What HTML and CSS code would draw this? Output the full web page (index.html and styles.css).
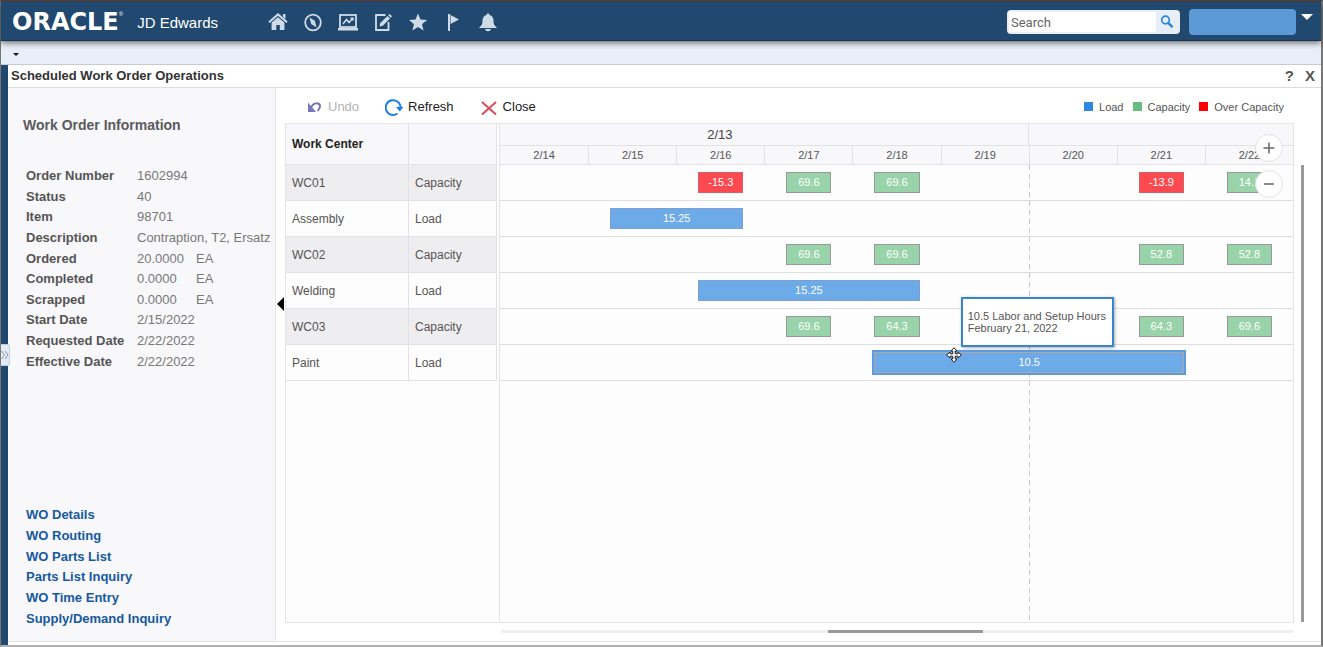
FILE: index.html
```html
<!DOCTYPE html>
<html lang="en">
<head>
<meta charset="utf-8">
<title>Scheduled Work Order Operations</title>
<link rel="stylesheet" href="styles.css">
</head>
<body>
<div class="app">
  <header class="topbar">
    <div class="brand"><span class="brand-logo">ORACLE</span><sup class="brand-mark">®</sup><span class="brand-product">JD Edwards</span></div>
    <nav class="nav">
      <button type="button" class="nav-btn" aria-label="Home"><svg viewBox="0 0 20 20"><path d="M1 10.2 10 2.4l9 7.8" fill="none" stroke="currentColor" stroke-width="2"/><path d="M15 2h2.4v5L15 5zM3.600 10.600 10 5.200l6.400 5.400V18h-4.600v-5H8.300v5H3.600z" fill="currentColor"/></svg></button>
      <button type="button" class="nav-btn" aria-label="Navigator"><svg viewBox="0 0 20 20"><circle cx="10" cy="10.500" r="7.800" fill="none" stroke="currentColor" stroke-width="1.800"/><path d="M6.500 5.500 11.800 8.800 13.500 15.500 8.200 12z" fill="currentColor"/></svg></button>
      <button type="button" class="nav-btn" aria-label="Dashboard"><svg viewBox="0 0 20 20"><rect x="2" y="3" width="16" height="12" fill="none" stroke="currentColor" stroke-width="1.800"/><path d="M5 12 8.500 7.500 11 10.500 15 6M12.500 6.200H15V8.500" fill="none" stroke="currentColor" stroke-width="1.500"/><path d="M0 16h20v2.500H0z" fill="currentColor"/></svg></button>
      <button type="button" class="nav-btn" aria-label="Edit"><svg viewBox="0 0 20 20"><path d="M12.500 3H3v15h12.500V10" fill="none" stroke="currentColor" stroke-width="1.800"/><path d="M6.500 14.500 7.300 11 14.500 4 17 6.500 9.800 13.700zM15.300 3.200 16.700 2l2.300 2.300-1.300 1.400z" fill="currentColor"/></svg></button>
      <button type="button" class="nav-btn" aria-label="Favorites"><svg viewBox="0 0 20 20"><path d="m10 1.500 2.500 6 6.500.5-5 4.200 1.600 6.300L10 15.100 4.400 18.500 6 12.200 1 8l6.500-.5z" fill="currentColor"/></svg></button>
      <button type="button" class="nav-btn" aria-label="Watchlist"><svg viewBox="0 0 20 20"><path d="M5 2h2v17H5zM7.500 3 16 7.500 7.500 12z" fill="currentColor"/></svg></button>
      <button type="button" class="nav-btn" aria-label="Notifications"><svg viewBox="0 0 20 20"><path d="M10 1.500c1 0 1.500.7 1.500 1.500 3 .8 4 3 4 6 0 3.500 1 4.500 3 6v1H1.500v-1c2-1.500 3-2.500 3-6 0-3 1-5.200 4-6 0-.8.500-1.500 1.500-1.500zM7 17h6c-.5 3-5.500 3-6 0z" fill="currentColor"/></svg></button>
    </nav>
    <form class="search">
      <input class="search-input" type="text" placeholder="Search" aria-label="Search">
      <button type="button" class="search-btn" aria-label="Run search"><svg viewBox="0 0 14 14"><circle cx="5.500" cy="5" r="3.800" fill="none" stroke="currentColor" stroke-width="1.700"/><path d="m8.500 8.200 4 4" stroke="currentColor" stroke-width="2.600"/></svg></button>
    </form>
    <button type="button" class="user" aria-label="User"></button>
    <button type="button" class="user-menu" aria-label="User menu"><span class="caret"></span></button>
  </header>
  <div class="tabstrip"><button type="button" class="tab-menu" aria-label="Open tabs"><span class="tab-caret"></span></button></div>
  <div class="body">
    <div class="rail"><button type="button" class="rail-btn" aria-label="Expand menu"><svg viewBox="0 0 8 10"><path d="m.5 1 3 4-3 4M4 1l3 4-3 4" fill="none" stroke="currentColor"/></svg></button></div>
    <main class="main">
      <div class="titlebar">
        <h1 class="title">Scheduled Work Order Operations</h1>
        <button type="button" class="title-btn">?</button>
        <button type="button" class="title-btn">X</button>
      </div>
      <div class="content">
        <aside class="info">
          <h2 class="info-title">Work Order Information</h2>
          <dl class="facts">
            <dt>Order Number</dt><dd>1602994</dd>
            <dt>Status</dt><dd>40</dd>
            <dt>Item</dt><dd>98701</dd>
            <dt>Description</dt><dd>Contraption, T2, Ersatz</dd>
            <dt>Ordered</dt><dd><span class="qty">20.0000</span>EA</dd>
            <dt>Completed</dt><dd><span class="qty">0.0000</span>EA</dd>
            <dt>Scrapped</dt><dd><span class="qty">0.0000</span>EA</dd>
            <dt>Start Date</dt><dd>2/15/2022</dd>
            <dt>Requested Date</dt><dd>2/22/2022</dd>
            <dt>Effective Date</dt><dd>2/22/2022</dd>
          </dl>
          <nav class="links">
            <a href="#">WO Details</a>
            <a href="#">WO Routing</a>
            <a href="#">WO Parts List</a>
            <a href="#">Parts List Inquiry</a>
            <a href="#">WO Time Entry</a>
            <a href="#">Supply/Demand Inquiry</a>
          </nav>
          <button type="button" class="collapse" aria-label="Collapse panel"></button>
        </aside>
        <section class="work">
          <div class="toolbar">
            <button type="button" class="tool tool-undo" disabled><svg viewBox="0 0 18 18"><path d="M3 4.500v9.500h8z" fill="#7476be"/><path d="M5.500 11C7 7 10 4.800 13 5.500c3 1 2.500 4.500-.5 7.500" fill="none" stroke="#7476be" stroke-width="2"/></svg>Undo</button>
            <button type="button" class="tool tool-refresh"><svg viewBox="0 0 18 18"><path d="M12.500 15.500A7.400 7.400 0 1 1 15.500 9.500" fill="none" stroke="#1d7fe0" stroke-width="2"/><path d="M11 9h7.500l-3.700 4.500z" fill="#1d7fe0"/></svg>Refresh</button>
            <button type="button" class="tool"><svg viewBox="0 0 18 18"><path d="m2 4 14 12.500M16 4 2 16.500" stroke="#dc4a57" stroke-width="2" fill="none"/></svg>Close</button>
            <ul class="legend">
              <li><span class="swatch swatch-load"></span>Load</li>
              <li><span class="swatch swatch-capacity"></span>Capacity</li>
              <li><span class="swatch swatch-over"></span>Over Capacity</li>
            </ul>
          </div>
          <div class="chart-area">
            <div class="chart">
              <div class="centers-pane">
                <table class="centers">
                  <thead><tr><th scope="col">Work Center</th><th></th></tr></thead>
                  <tbody>
                    <tr class="shade"><td>WC01</td><td>Capacity</td></tr>
                    <tr><td>Assembly</td><td>Load</td></tr>
                    <tr class="shade"><td>WC02</td><td>Capacity</td></tr>
                    <tr><td>Welding</td><td>Load</td></tr>
                    <tr class="shade"><td>WC03</td><td>Capacity</td></tr>
                    <tr><td>Paint</td><td>Load</td></tr>
                  </tbody>
                </table>
              </div>
              <div class="gantt">
                <div class="weeks"><div class="week week-first"><span>2/13</span></div><div class="week"></div></div>
                <div class="days"><span>2/14</span><span>2/15</span><span>2/16</span><span>2/17</span><span>2/18</span><span>2/19</span><span>2/20</span><span>2/21</span><span>2/22</span></div>
                <div class="lanes">
                  <div class="week-line"></div>
                  <div class="lane"><span class="bar over d16">-15.3</span><span class="bar cap d17">69.6</span><span class="bar cap d18">69.6</span><span class="bar over d21">-13.9</span><span class="bar cap d22">14.1</span></div>
                  <div class="lane"><span class="bar load assembly">15.25</span></div>
                  <div class="lane"><span class="bar cap d17">69.6</span><span class="bar cap d18">69.6</span><span class="bar cap d21">52.8</span><span class="bar cap d22">52.8</span></div>
                  <div class="lane"><span class="bar load welding">15.25</span></div>
                  <div class="lane"><span class="bar cap d17">69.6</span><span class="bar cap d18">64.3</span><span class="bar cap d21">64.3</span><span class="bar cap d22">69.6</span></div>
                  <div class="lane"><span class="bar load paint">10.5</span></div>
                  <div class="tooltip" role="tooltip">10.5 Labor and Setup Hours<br>February 21, 2022</div>
                  <svg class="cursor" viewBox="0 0 16 16"><path d="M8 .7 11 4H9.200v2.800H12V5l3.300 3L12 11V9.200H9.200V12H11l-3 3.300L5 12h1.800V9.200H4V11L.7 8 4 5v1.800h2.800V4H5z" fill="#fff" stroke="#222" stroke-width="1"/></svg>
                </div>
                <div class="zoom">
                  <button type="button" class="zoom-btn" aria-label="Zoom in"><svg viewBox="0 0 12 12"><path d="M6 .5v11M.5 6h11" stroke="currentColor" stroke-width="1.500"/></svg></button>
                  <button type="button" class="zoom-btn" aria-label="Zoom out"><svg viewBox="0 0 12 12"><path d="M1 6h10" stroke="currentColor" stroke-width="1.500"/></svg></button>
                </div>
              </div>
            </div>
            <div class="vscroll"></div>
          </div>
          <div class="hscroll"><div class="hscroll-thumb"></div></div>
        </section>
      </div>
    </main>
  </div>
</div>
</body>
</html>
```

FILE: styles.css
```css
* { box-sizing: border-box; }

body {
  margin: 0;
  font-family: "Liberation Sans", Arial, sans-serif;
  font-size: 12px;
  color: #555;
  background: #fff;
}

button {
  margin: 0;
  padding: 0;
  border: 0;
  background: none;
  font: inherit;
  color: inherit;
}

.app {
  display: flex;
  flex-direction: column;
  min-height: 100vh;
  border: solid #777;
  border-width: 2px 2px 2px 1px;
  border-top-color: #4b454b;
  border-bottom-color: #b0b0b0;
}

/* Top bar */
.topbar {
  position: relative;
  display: flex;
  align-items: center;
  height: 39px;
  padding: 2px 8px 0 11px;
  background: #21486e;
  border-bottom: 1px solid #17324e;
  box-shadow: 0 2px 6px rgba(0, 0, 0, 0.55);
  color: #fff;
}

.brand {
  display: flex;
  align-items: center;
  width: 256px;
}

.brand-logo {
  font-family: "DejaVu Sans", sans-serif;
  font-size: 24px;
  font-weight: bold;
  line-height: 22px;
}

.brand-mark {
  align-self: flex-start;
  font-size: 6px;
  line-height: 6px;
}

.brand-product {
  margin-left: auto;
  margin-right: 50px;
  font-size: 15px;
  white-space: nowrap;
}

.nav {
  display: flex;
  gap: 15px;
}

.nav-btn {
  width: 20px;
  height: 20px;
  color: #cfdbe8;
}

.nav-btn svg { display: block; width: 20px; height: 20px; }

.search {
  display: flex;
  width: 173px;
  height: 24px;
  margin-left: auto;
  padding: 2px;
  background: #e8eef7;
  border-radius: 4px;
}

.search-input {
  flex: 1;
  min-width: 0;
  padding: 0 2px;
  border: 0;
  background: #fff;
  font: 13px Roboto, "Noto Sans", sans-serif;
  color: #666;
}

.search-input::placeholder { color: #666; opacity: 1; }

.search-btn {
  width: 22px;
  color: #2a86dc;
}

.search-btn svg { display: block; width: 14px; height: 14px; margin: 0 auto; }

.user {
  width: 107px;
  height: 26px;
  margin-left: 9px;
  border-radius: 4px;
  background: #5b9ad6;
}

.user-menu {
  width: 12px;
  height: 26px;
  margin-left: 5px;
}

.caret {
  display: block;
  margin-top: -8px;
  border: solid transparent;
  border-width: 6px 6px 0;
  border-top-color: #fff;
}

.tabstrip {
  height: 24px;
  padding: 12px 0 0 12px;
  background: #e9eff8;
  border-bottom: 1px solid #c8cacf;
}

.tab-menu { display: block; }

.tab-caret {
  display: block;
  border: solid transparent;
  border-width: 3px 3px 0;
  border-top-color: #111;
}

/* Body */
.body {
  display: flex;
  flex: 1;
}

.rail {
  position: relative;
  z-index: 1;
  width: 7px;
  background: #21486e;
}

.rail-btn {
  position: absolute;
  left: 0;
  top: 50%;
  transform: translateY(-50%);
  width: 9px;
  height: 22px;
  background: #e3ebf5;
  border: 1px solid #c3cfdd;
  border-left: 0;
  border-radius: 0 3px 3px 0;
  color: #8b95a1;
}

.rail-btn svg { display: block; width: 8px; height: 10px; }

.main {
  display: flex;
  flex-direction: column;
  flex: 1;
  min-width: 0;
}

.titlebar {
  display: flex;
  align-items: center;
  gap: 11px;
  height: 23px;
  padding: 0 6px 0 3px;
  border-bottom: 1px solid #ddd;
}

.title {
  flex: 1;
  margin: 0;
  font-size: 13px;
  line-height: 20px;
  color: #333;
}

.title-btn {
  font-size: 15px;
  font-weight: bold;
  line-height: 20px;
  color: #555;
}

.content {
  display: flex;
  flex: 1;
  margin-bottom: 3px;
  border-bottom: 1px solid #e2e2e2;
}

/* Work order panel */
.info {
  position: relative;
  display: flex;
  flex-direction: column;
  width: 268px;
  padding: 27px 0 12px 15px;
  background: #f8f7fa;
  border-right: 1px solid #e6e6ea;
}

.info-title {
  margin: 0 0 31px;
  font-size: 14px;
  line-height: 20px;
  color: #5a5a5d;
}

.facts {
  display: grid;
  grid-template-columns: 111px 1fr;
  grid-template-rows: repeat(10, 1fr);
  align-items: center;
  height: 206px;
  margin: 0 0 0 3px;
  font-size: 13px;
  line-height: 18px;
  white-space: nowrap;
}

.facts dt {
  font-weight: bold;
  color: #555;
}

.facts dd {
  margin: 0;
  color: #777;
}

.qty {
  display: inline-block;
  width: 59px;
}

.links {
  display: grid;
  grid-template-rows: repeat(6, 1fr);
  align-items: center;
  justify-items: start;
  height: 124px;
  margin: auto 0 0 3px;
}

.links a {
  font-size: 13px;
  font-weight: bold;
  line-height: 18px;
  color: #15599f;
  text-decoration: none;
}

.collapse {
  position: absolute;
  right: -9px;
  top: 209px;
  border: solid transparent;
  border-width: 7px 7px 7px 0;
  border-right-color: #000;
}

/* Work area */
.work {
  display: flex;
  flex-direction: column;
  flex: 1;
  min-width: 0;
  padding-left: 9px;
}

.toolbar {
  display: flex;
  align-items: center;
  height: 35px;
  padding: 2px 37px 0 20px;
}

.tool {
  display: flex;
  align-items: center;
  gap: 5px;
  margin-right: 26px;
  font-size: 13px;
  color: #222;
}

.tool svg { width: 18px; height: 18px; }

.tool-undo { color: #b2b2b2; }

.legend {
  display: flex;
  gap: 9px;
  margin: 0 0 0 auto;
  padding: 0;
  list-style: none;
  font-size: 11px;
}

.legend li {
  display: flex;
  align-items: center;
  gap: 6px;
}

.swatch { width: 9px; height: 9px; }
.swatch-load { background: #2f86e4; }
.swatch-capacity { background: #68bd83; }
.swatch-over { background: #f00; }

.chart-area {
  display: flex;
  flex: 1;
}

.chart {
  display: flex;
  flex: 1;
  min-width: 0;
  background: #fdfdfe;
  border: 1px solid #e4e4e8;
}

.centers-pane {
  width: 214px;
  padding-right: 2px;
  border-right: 1px solid #e4e4e8;
}

.centers {
  width: 100%;
  table-layout: fixed;
  border-collapse: separate;
  border-spacing: 0;
  color: #555;
}

.centers th,
.centers td {
  height: 36px;
  padding: 0 6px;
  border-right: 1px solid #e2e2e6;
  border-bottom: 1px solid #e2e2e6;
  text-align: left;
}

.centers th {
  height: 41px;
  background: #f8f7fa;
  color: #222;
}

.centers th:first-child { width: 123px; }
.shade { background: #eeeef0; }

.gantt {
  position: relative;
  flex: 1;
  min-width: 0;
}

.weeks {
  display: grid;
  grid-template-columns: 6fr 3fr;
  height: 22px;
  background: #f8f7fa;
  border-bottom: 1px solid #e2e2e6;
}

.week-first {
  display: grid;
  grid-template-columns: repeat(6, 1fr);
  border-right: 1px solid #e2e2e6;
  color: #444;
}

.week-first span {
  grid-column: 3;
  line-height: 21px;
  font-size: 13px;
  text-align: center;
}

.days {
  display: grid;
  grid-template-columns: repeat(9, 1fr);
  height: 19px;
  background: #f8f7fa;
  border-bottom: 1px solid #e2e2e6;
  font-size: 11px;
  line-height: 18px;
  text-align: center;
}

.days span + span { border-left: 1px solid #e2e2e6; }

.lanes {
  position: relative;
  height: calc(100% - 41px);
}

.week-line {
  position: absolute;
  top: 0;
  bottom: 0;
  left: 66.67%;
  width: 1px;
  background: repeating-linear-gradient(#c8c8c8 0 5px, transparent 5px 9px);
}

.lane {
  display: grid;
  grid-template-columns: repeat(36, 1fr);
  align-items: center;
  height: 36px;
  border-bottom: 1px solid #dedede;
}

.bar {
  position: relative;
  grid-row: 1;
  height: 21px;
  margin-right: -1px;
  border: 1px solid #999;
  font-size: 11px;
  line-height: 19px;
  text-align: center;
  color: #fff;
}

.over { background: #fc4a50; border-color: #d4606c; }
.cap { background: #98d3aa; border-color: #999; }
.load { background: #6caae8; border-color: #7f9fcf; }

.d16 { grid-column: 10 / 12; }
.d17 { grid-column: 14 / 16; }
.d18 { grid-column: 18 / 20; }
.d21 { grid-column: 30 / 32; }
.d22 { grid-column: 34 / 36; }
.assembly { grid-column: 6 / 12; }
.welding { grid-column: 10 / 20; }

.paint {
  grid-column: 18 / 32;
  border-color: #a9a9a9;
  outline: 2px solid #5c9be0;
}

.tooltip {
  position: absolute;
  top: 132px;
  left: 58.1%;
  padding: 11px 6px 11px 5px;
  background: #fff;
  border: 2px solid #3a84cb;
  box-shadow: 1px 1px 3px rgba(0, 0, 0, 0.3);
  font-size: 11px;
  line-height: 12px;
  white-space: nowrap;
}

.cursor {
  position: absolute;
  top: 182px;
  left: 56.3%;
  width: 16px;
  height: 16px;
}

.zoom {
  position: absolute;
  top: 10px;
  right: 10px;
  display: grid;
  gap: 8px;
}

.zoom-btn {
  display: grid;
  place-items: center;
  width: 28px;
  height: 28px;
  border: 1px solid #e2e2e2;
  border-radius: 50%;
  background: #fff;
  color: #666;
}

.zoom-btn svg { width: 12px; height: 12px; }

.vscroll {
  width: 3px;
  margin: 42px 17px 1px 7px;
  background: #999;
}

.hscroll {
  height: 3px;
  margin: 7px 28px 8px 216px;
  background: #f0eff1;
}

.hscroll-thumb {
  width: 19.6%;
  height: 3px;
  margin-left: 41.3%;
  background: #999;
}
```
